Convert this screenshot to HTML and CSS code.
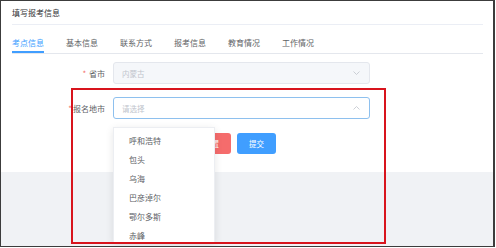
FILE: index.html
```html
<html>
  <head>
    <title>填写报考信息</title>
    <link rel="stylesheet" href="styles.css">
  </head>
  <body>
    <div class="frame">
      <section class="card">
        <div class="card-header">填写报考信息</div>
        <nav class="tabs">
          <span class="tab active">考点信息</span>
          <span class="tab">基本信息</span>
          <span class="tab">联系方式</span>
          <span class="tab">报考信息</span>
          <span class="tab">教育情况</span>
          <span class="tab">工作情况</span>
        </nav>
        <form class="form">
          <div class="form-item">
            <label class="form-label"><span class="req">*</span> 省市</label>
            <div class="select disabled">
              <span>内蒙古</span>
              <svg class="arrow" width="7" height="4" viewBox="0 0 7 4">
                <path d="M0.5 0.5 L3.5 3.5 L6.5 0.5" fill="none" stroke="#c0c4cc" stroke-width="0.8"/>
              </svg>
            </div>
          </div>
          <div class="form-item">
            <label class="form-label"><span class="req">*</span>报名地市</label>
            <div class="select focused">
              <span>请选择</span>
              <svg class="arrow" width="7" height="4" viewBox="0 0 7 4">
                <path d="M0.5 3.5 L3.5 0.5 L6.5 3.5" fill="none" stroke="#c0c4cc" stroke-width="0.8"/>
              </svg>
            </div>
          </div>
          <div class="form-actions">
            <button type="button" class="btn danger">重置</button>
            <button type="button" class="btn primary">提交</button>
          </div>
        </form>
      </section>

      <ul class="dropdown">
        <li>呼和浩特</li>
        <li>包头</li>
        <li>乌海</li>
        <li>巴彦淖尔</li>
        <li>鄂尔多斯</li>
        <li>赤峰</li>
      </ul>

      <div class="highlight"></div>
    </div>
  </body>
</html>
```

FILE: styles.css
```css
html,
body {
  padding: 0;
  margin: 0;
  background: #fff;
}

body {
  font-family: "Noto Sans CJK SC", "Noto Sans", sans-serif;
  font-size: 8px;
  color: #606266;
}

.frame {
  position: relative;
  box-sizing: border-box;
  width: 495px;
  height: 247px;
  border: 1px solid #3c3c3c;
  border-right-width: 2px;
  overflow: hidden;
  background: #f0f2f5;
}

.card {
  background: #fff;
  height: 171px;
  padding: 0 10px 0 11px;
  box-sizing: border-box;
}

.card-header {
  height: 23px;
  line-height: 23px;
  color: #303133;
  border-bottom: 1px solid #ebeef5;
}

.tabs {
  display: flex;
  gap: 22px;
  height: 28px;
  border-bottom: 1px solid #e4e7ed;
}

.tab {
  box-sizing: border-box;
  height: 28px;
  padding-top: 13px;
  line-height: 10px;
  border-bottom: 2px solid transparent;
  color: #606266;
}

.tab.active {
  color: #409eff;
  border-bottom-color: #409eff;
}

.form {
  margin: 0;
  padding-top: 8px;
}

.form-item {
  display: flex;
  align-items: center;
  height: 22px;
  margin-bottom: 13px;
}

.form-label {
  box-sizing: border-box;
  width: 101px;
  padding-right: 8px;
  text-align: right;
  color: #606266;
}

.req {
  color: #f56c6c;
  margin-right: 1px;
}

.select {
  box-sizing: border-box;
  width: 257px;
  height: 22px;
  display: flex;
  align-items: center;
  justify-content: space-between;
  padding: 0 9px 0 8px;
  border: 1px solid #dcdfe6;
  border-radius: 3px;
  color: #c0c4cc;
  font-size: 7.5px;
}

.select.disabled {
  background: #f5f7fa;
  border-color: #e4e7ed;
}

.select.focused {
  border-color: #8ec0ee;
}

.form-actions {
  display: flex;
  gap: 6px;
  margin-left: 180px;
  margin-top: 14px;
}

.btn {
  width: 39px;
  height: 21px;
  border: none;
  border-radius: 3px;
  color: #fff;
  font-family: inherit;
  font-size: 7.5px;
  padding: 0;
}

.btn.danger {
  background: #f56c6c;
}

.btn.primary {
  background: #409eff;
}

.dropdown {
  position: absolute;
  left: 112px;
  top: 126px;
  width: 102px;
  height: 116px;
  margin: 0;
  padding: 3px 0 0;
  box-sizing: border-box;
  list-style: none;
  background: #fff;
  border: 1px solid #eceef2;
  box-shadow: 0 2px 8px rgba(0, 0, 0, 0.1);
  overflow: hidden;
}

.dropdown li {
  height: 19px;
  line-height: 19px;
  padding-left: 15px;
  color: #606266;
}

.highlight {
  position: absolute;
  left: 70px;
  top: 87px;
  width: 315px;
  height: 156px;
  box-sizing: border-box;
  border: 2px solid #d8141d;
  pointer-events: none;
}
```
